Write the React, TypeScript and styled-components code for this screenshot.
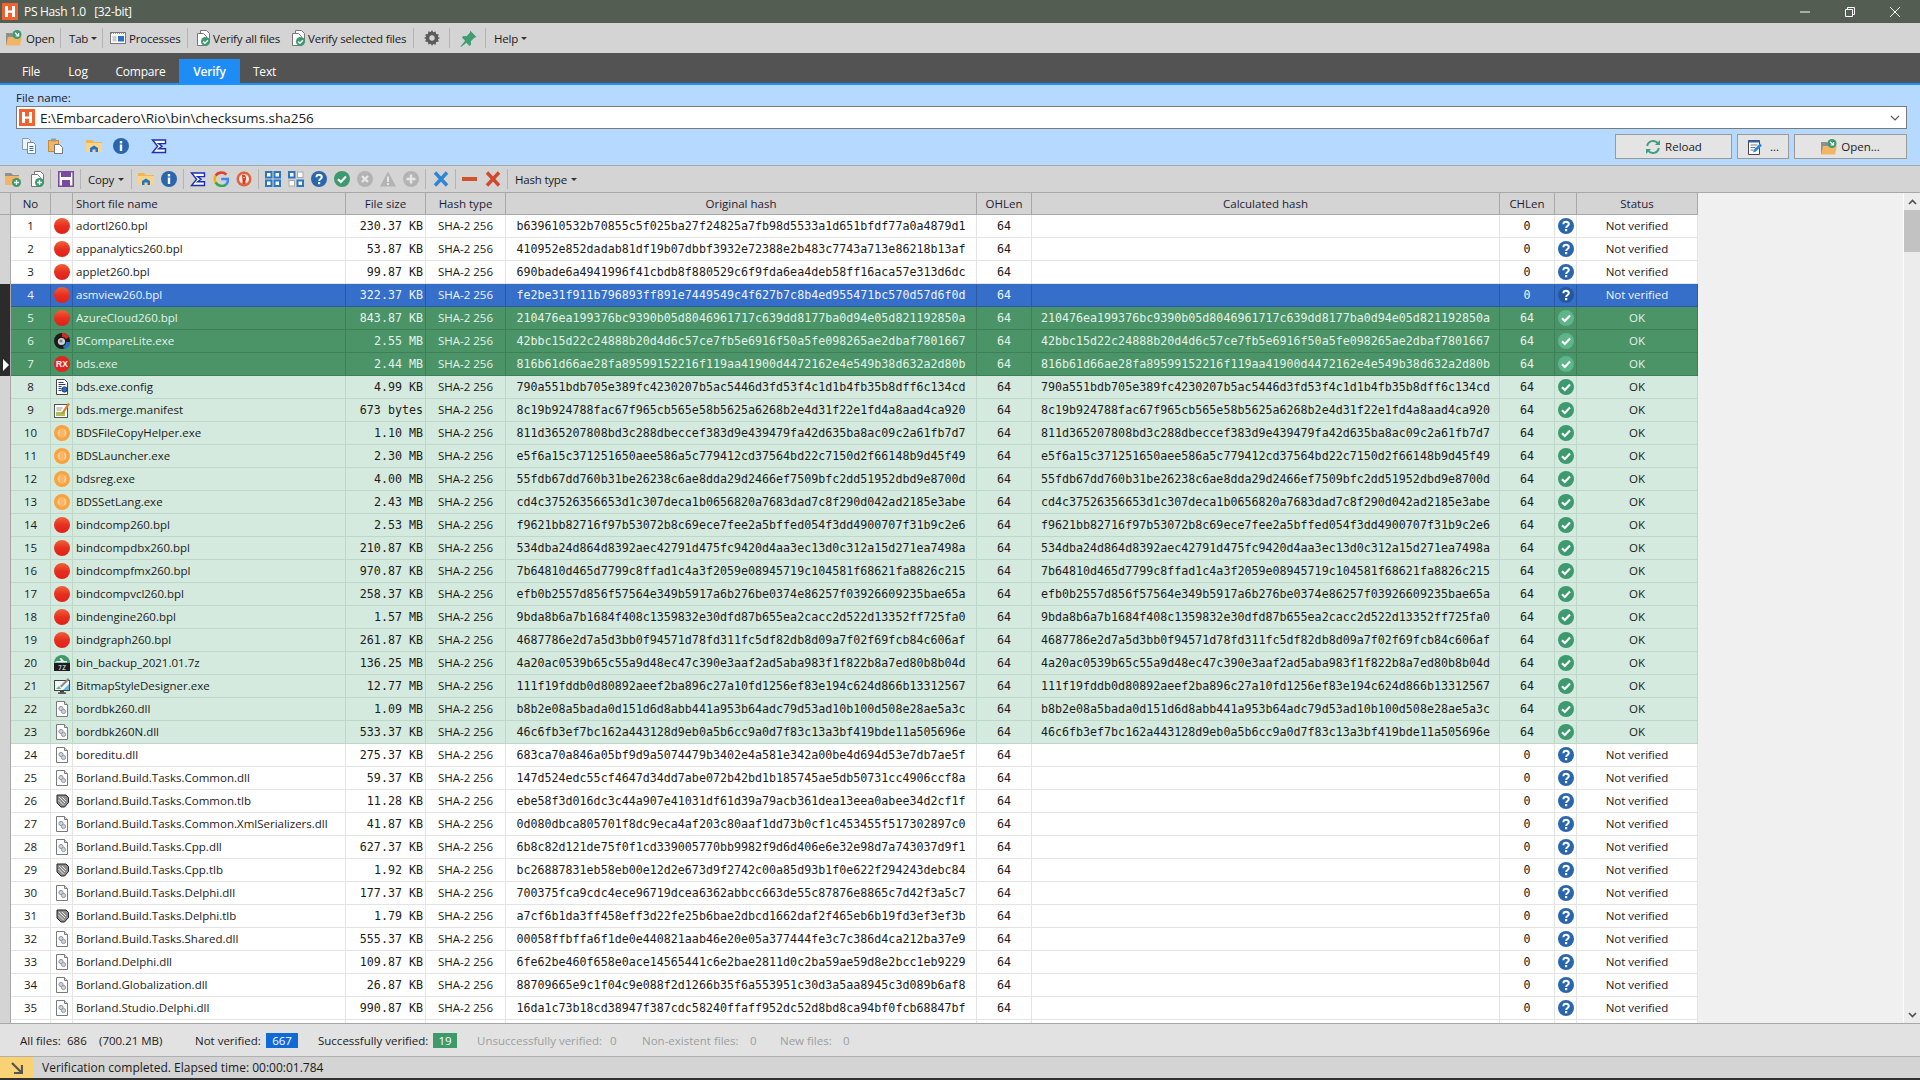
// App.tsx
import React from 'react';
import styled, { createGlobalStyle } from 'styled-components';

const UI_FONT = '"Open Sans", "Noto Sans", sans-serif';
const MONO_FONT = '"DejaVu Sans Mono", "Liberation Mono", monospace';
const COLS = '11px 40px 22px 273px 80px 80px 471px 55px 468px 55px 22px 121px';

const GlobalStyle = createGlobalStyle`
  html, body {
    margin: 0;
    padding: 0;
    background: #f0f0f0;
  }
  body {
    font-family: ${UI_FONT};
    font-size: 11.5px;
    color: #1a1a1a;
  }
`;

const Frame = styled.div`
  width: 1920px;
  height: 1080px;
  display: flex;
  flex-direction: column;
  overflow: hidden;
`;

const TitleBar = styled.div`
  height: 23px;
  flex: none;
  display: flex;
  align-items: center;
  background: #535d52;
  color: #fff;
  font-size: 12px;
  padding-left: 2px;
`;

const TitleText = styled.span`
  margin-left: 6px;
  white-space: pre;
  letter-spacing: -0.33px;
`;

const WinControls = styled.div`
  margin-left: auto;
  display: flex;
  align-items: center;
  padding-right: 20px;
  gap: 35px;
`;

const MainToolbar = styled.div`
  height: 30px;
  flex: none;
  display: flex;
  align-items: center;
  background: #d4d4d4;
  padding-left: 6px;
`;

const ToolButton = styled.div<{ $gap?: number; $w: number; $l?: number }>`
  display: flex;
  align-items: center;
  flex: none;
  width: ${(p) => p.$w}px;
  margin-left: ${(p) => p.$l ?? 0}px;
  gap: ${(p) => p.$gap ?? 3}px;
  white-space: nowrap;
  letter-spacing: -0.2px;
`;

const ToolSep = styled.div<{ $l?: number; $r?: number }>`
  width: 1px;
  height: 20px;
  background: #b4b4b4;
  margin: 0 ${(p) => p.$r ?? 7}px 0 ${(p) => p.$l ?? 7}px;
  flex: none;
`;

const Caret = styled.span`
  width: 0;
  height: 0;
  border-left: 3px solid transparent;
  border-right: 3px solid transparent;
  border-top: 3px solid #333;
  margin-left: auto;
`;

const TabBar = styled.div`
  height: 30px;
  flex: none;
  display: flex;
  align-items: flex-end;
  background: #535353;
  padding-left: 8px;
  border-bottom: 2px solid #1e90ff;
`;

const Tab = styled.div<{ $active?: boolean; $w: number }>`
  height: 24px;
  width: ${(p) => p.$w}px;
  display: flex;
  align-items: center;
  justify-content: center;
  color: #fff;
  font-size: 12px;
  letter-spacing: -0.2px;
  background: ${(p) => (p.$active ? '#1e8cf5' : 'transparent')};
  font-weight: ${(p) => (p.$active ? 600 : 400)};
`;

const FilePanel = styled.div`
  height: 80px;
  flex: none;
  box-sizing: border-box;
  background: #b5d9ff;
  padding: 5px 13px 0 16px;
`;

const FieldLabel = styled.div`
  height: 16px;
  line-height: 16px;
`;

const Combo = styled.div`
  height: 23px;
  box-sizing: border-box;
  display: flex;
  align-items: center;
  background: #fff;
  border: 1px solid #7a7a7a;
  padding: 0 6px 0 2px;
`;

const ComboText = styled.span`
  margin-left: 5px;
  font-size: 13.5px;
  flex: 1;
`;

const PanelRow = styled.div`
  margin-top: 5px;
  height: 25px;
  display: flex;
  align-items: center;
`;

const IconSlot = styled.div<{ $l: number }>`
  display: flex;
  margin-left: ${(p) => p.$l}px;
  margin-bottom: 1px;
`;

const ActionButtons = styled.div`
  margin-left: auto;
  display: flex;
  gap: 5px;
`;

const ActionButton = styled.div<{ $w: number }>`
  width: ${(p) => p.$w}px;
  height: 25px;
  box-sizing: border-box;
  display: flex;
  align-items: center;
  justify-content: center;
  gap: 4px;
  background: #e4e4e4;
  border: 1px solid #9a9a9a;
`;

const GridToolbar = styled.div`
  height: 27px;
  flex: none;
  box-sizing: border-box;
  display: flex;
  align-items: center;
  background: #d4d4d4;
  border-top: 1px solid #a8a8a8;
  padding-left: 5px;
`;

const StripIcon = styled.div<{ $l?: number }>`
  display: flex;
  margin-left: ${(p) => p.$l ?? 0}px;
`;

const GridArea = styled.div`
  height: 832px;
  flex: none;
  display: flex;
  background: #f0f0f0;
  border-top: 1px solid #a8a8a8;
  border-bottom: 1px solid #a8a8a8;
  box-sizing: border-box;
`;

const Table = styled.div`
  width: 1698px;
  flex: none;
  overflow: hidden;
`;

const HeaderRow = styled.div`
  display: grid;
  grid-template-columns: ${COLS};
  height: 22px;
  box-sizing: border-box;
  background: #d4d4d4;
  border-bottom: 1px solid #a8a8a8;
`;

const HeaderCell = styled.div<{ $left?: boolean }>`
  display: flex;
  align-items: center;
  justify-content: ${(p) => (p.$left ? 'flex-start' : 'center')};
  padding-left: ${(p) => (p.$left ? 3 : 0)}px;
  border-right: 1px solid #a8a8a8;
  color: #1c1c34;
`;

type Tone = 'plain' | 'selected' | 'done' | 'ok';

const TONES: Record<Tone, { bg: string; line: string; fg: string; mark: string }> = {
  plain: { bg: '#ffffff', line: '#e4e4e4', fg: '#1a1a1a', mark: '#d4d4d4' },
  selected: { bg: '#366fc9', line: '#2a5aa6', fg: '#eef4fc', mark: '#2b2b2b' },
  done: { bg: '#4a9468', line: '#3d7f58', fg: '#e6f2ea', mark: '#2b2b2b' },
  ok: { bg: '#d5eadf', line: '#bdd7c9', fg: '#1a1a1a', mark: '#d4d4d4' },
};

const Row = styled.div<{ $tone: Tone }>`
  display: grid;
  grid-template-columns: ${COLS};
  height: 23px;
  box-sizing: border-box;
  background: ${(p) => TONES[p.$tone].bg};
  color: ${(p) => TONES[p.$tone].fg};
  border-bottom: 1px solid ${(p) => TONES[p.$tone].line};
  --cell-line: ${(p) => TONES[p.$tone].line};
`;

const Mark = styled.div<{ $tone: Tone }>`
  display: flex;
  align-items: center;
  padding-left: 3px;
  box-sizing: border-box;
  background: ${(p) => TONES[p.$tone].mark};
  border-right: 1px solid #a8a8a8;
  margin-bottom: -1px;
`;

const Pointer = styled.span`
  width: 0;
  height: 0;
  border-top: 6px solid transparent;
  border-bottom: 6px solid transparent;
  border-left: 6px solid #fff;
`;

const Cell = styled.div<{ $align?: 'left' | 'right' | 'center'; $mono?: boolean }>`
  display: flex;
  align-items: center;
  min-width: 0;
  white-space: pre;
  overflow: hidden;
  border-right: 1px solid var(--cell-line);
  justify-content: ${(p) =>
    p.$align === 'left' ? 'flex-start' : p.$align === 'right' ? 'flex-end' : 'center'};
  padding-left: ${(p) => (p.$align === 'left' ? 3 : 0)}px;
  padding-right: ${(p) => (p.$align === 'right' ? 2 : 0)}px;
  padding-bottom: ${(p) => (p.$mono ? 0 : 1)}px;
  font-family: ${(p) => (p.$mono ? MONO_FONT : UI_FONT)};
  font-size: ${(p) => (p.$mono ? '11.67px' : '11.5px')};
`;

const IconCell = styled(Cell)`
  padding-bottom: 0;
`;

const EmptySpace = styled.div`
  flex: 1;
  background: #f0f0f0;
`;

const ScrollBar = styled.div`
  width: 17px;
  flex: none;
  display: flex;
  flex-direction: column;
  align-items: center;
  background: #ececec;
  border-left: 1px solid #fafafa;
  box-sizing: border-box;
`;

const ScrollArrow = styled.div`
  height: 17px;
  flex: none;
  display: flex;
  align-items: center;
  justify-content: center;
`;

const ScrollThumb = styled.div`
  width: 100%;
  height: 42px;
  background: #c2c2c2;
`;

const ScrollFill = styled.div`
  flex: 1;
`;

const StatusBar = styled.div`
  height: 32px;
  flex: none;
  box-sizing: border-box;
  display: flex;
  align-items: center;
  background: #e2e2e2;
  padding-left: 20px;
`;

const StatLabel = styled.span<{ $muted?: boolean; $w?: number; $l?: number }>`
  flex: none;
  width: ${(p) => (p.$w ? `${p.$w}px` : 'auto')};
  margin-left: ${(p) => p.$l ?? 0}px;
  color: ${(p) => (p.$muted ? '#9aa0a0' : '#1a1a1a')};
  white-space: pre;
`;

const Badge = styled.span<{ $bg: string; $w: number }>`
  width: ${(p) => p.$w}px;
  height: 15px;
  flex: none;
  display: flex;
  align-items: center;
  justify-content: center;
  color: #fff;
  background: ${(p) => p.$bg};
`;

const MessageBar = styled.div`
  height: 22px;
  flex: none;
  box-sizing: border-box;
  display: flex;
  align-items: center;
  background: #d4d4d4;
  border-top: 1px solid #b0b0b0;
`;

const MessageIcon = styled.div`
  width: 33px;
  height: 100%;
  flex: none;
  display: flex;
  align-items: center;
  justify-content: center;
  background: #f9d373;
`;

const MessageText = styled.span`
  margin-left: 9px;
  font-size: 12px;
`;

const BottomLine = styled.div`
  flex: 1;
  background: #303030;
`;

/* ---------- drawn icons ---------- */

const Svg: React.FC<{ s?: number; children: React.ReactNode }> = ({ s = 16, children }) => (
  <svg width={s} height={s} viewBox="0 0 16 16" style={{ display: 'block', flex: 'none' }}>
    {children}
  </svg>
);

const HLogo = () => (
  <svg width="16" height="17" viewBox="0 0 16 17" style={{ display: 'block', flex: 'none' }}>
    <rect width="16" height="17" fill="#f2622e" />
    <path d="M3 3h3v4.5h4V3h3v11h-3V9.8H6V14H3z" fill="#fff" />
  </svg>
);

const RedBall = () => (
  <Svg>
    <defs>
      <linearGradient id="redball" x1="0" y1="0" x2="0" y2="1">
        <stop offset="0" stopColor="#ee6238" />
        <stop offset="0.5" stopColor="#e6301f" />
        <stop offset="1" stopColor="#e0201a" />
      </linearGradient>
    </defs>
    <circle cx="8" cy="8" r="8" fill="url(#redball)" />
  </Svg>
);

const OrangeBall = () => (
  <Svg>
    <circle cx="8" cy="8" r="8" fill="#f9a23e" />
    <circle cx="8" cy="8" r="5" fill="#fbb565" />
    <path d="M5.5 5c-1 2-1 4 0 6M10.5 5c1 2 1 4 0 6" stroke="#fde0b8" strokeWidth="1" fill="none" />
    <path d="M7 10.5h.1M9 10.5h.1" stroke="#fde0b8" strokeWidth="1" />
  </Svg>
);

const CompareIcon = () => (
  <Svg>
    <circle cx="8" cy="8" r="8" fill="#1c1c1c" />
    <path d="M8 0a8 8 0 0 1 7 4L12 6a4 4 0 0 0-4-2z" fill="#d62a20" />
    <path d="M16 9a8 8 0 0 1-6 7l-1-3a4 4 0 0 0 3-4z" fill="#2d6fc4" />
    <circle cx="7.5" cy="8.5" r="3.6" fill="#cfd3d3" />
    <circle cx="7" cy="8" r="1.6" fill="#7b8080" />
  </Svg>
);

const RxIcon = () => (
  <Svg>
    <circle cx="8" cy="8" r="8" fill="#e1251b" />
    <text x="8" y="11" textAnchor="middle" fontSize="8.5" fontWeight="700" fill="#fff" fontFamily="Liberation Sans, sans-serif">
      RX
    </text>
  </Svg>
);

const ConfigIcon = () => (
  <Svg>
    <path d="M2.5.5h8l3 3v12h-11z" fill="#fff" stroke="#444" />
    <path d="M4.5 3.5h5M4.5 5.5h7M4.5 7.5h3M4.5 9.5h3M4.5 11.5h3" stroke="#223a88" />
    <circle cx="10.5" cy="10.5" r="2.6" fill="#2f6fc0" stroke="#16366e" />
  </Svg>
);

const ManifestIcon = () => (
  <Svg>
    <rect x="0.5" y="2.5" width="13" height="13" fill="#fdfdf6" stroke="#555" />
    <path d="M2 2.5h10" stroke="#555" strokeDasharray="1 1" />
    <path d="M2.5 6h6M2.5 8h5" stroke="#9a9a9a" />
    <rect x="2" y="10" width="9" height="4" fill="#a9c15e" />
    <path d="M8 10l6-9 2 1-6 9-3 1z" fill="#d9812f" />
  </Svg>
);

const SevenZipIcon = () => (
  <Svg>
    <path d="M0 8a8 8 0 0 1 16 0z" fill="#3d9a6b" />
    <path d="M3 6h4l-1.5-3h2L10 6h3v1.5H0z" fill="#fff" opacity="0.9" />
    <rect y="8" width="16" height="8" fill="#1d1d1d" />
    <text x="8" y="14.6" textAnchor="middle" fontSize="6.5" fill="#fff" fontFamily="DejaVu Sans Mono, monospace">
      7Z
    </text>
  </Svg>
);

const DesignerIcon = () => (
  <Svg>
    <rect x="0.5" y="2.5" width="15" height="10" fill="#f3f6f8" stroke="#444" />
    <path d="M9 12l6-6v6z" fill="#67b7e3" />
    <path d="M2 11l3-3 2 3z" fill="#5eb571" />
    <path d="M6 8l8-8 1.5 1.5-8 8z" fill="#8b8b8b" />
    <rect x="6" y="13" width="4" height="1.5" fill="#444" />
    <rect x="4" y="14.5" width="8" height="1.2" fill="#222" />
  </Svg>
);

const DllIcon = () => (
  <Svg>
    <path d="M2.5.5h8l3 3v12h-11z" fill="#fff" stroke="#7a7a7a" />
    <path d="M10.5.5v3h3" fill="#ddd" stroke="#7a7a7a" />
    <circle cx="7" cy="7.5" r="2.1" fill="#cdd3d8" stroke="#8f979e" />
    <circle cx="9.5" cy="10.5" r="2.1" fill="#cdd3d8" stroke="#8f979e" />
  </Svg>
);

const TlbIcon = () => (
  <Svg>
    <path d="M3 2h9l2.5 2.5v5L10.500 14H7L3 10z" fill="#8d8d8d" stroke="#222" />
    <path d="M5 4l6 6M8 4l4 4M4.500 7l5 5" stroke="#e8e8e8" />
  </Svg>
);

const ROW_ICONS: Record<string, React.FC> = {
  r: RedBall,
  o: OrangeBall,
  c: CompareIcon,
  x: RxIcon,
  g: ConfigIcon,
  m: ManifestIcon,
  z: SevenZipIcon,
  s: DesignerIcon,
  d: DllIcon,
  t: TlbIcon,
};

const HelpIcon: React.FC<{ fill?: string }> = ({ fill = '#2a66ae' }) => (
  <Svg>
    <circle cx="8" cy="8" r="8" fill={fill} />
    <path d="M5.4 6.2c0-3.2 5.4-3.2 5.4-.1 0 2-2.6 1.9-2.6 3.9" stroke="#fff" strokeWidth="2" fill="none" />
    <rect x="7" y="11" width="2.2" height="2.2" fill="#fff" />
  </Svg>
);

const CheckIcon: React.FC<{ fill?: string }> = ({ fill = '#3d9a6e' }) => (
  <Svg>
    <circle cx="8" cy="8" r="8" fill={fill} />
    <path d="M4 8.3l2.8 2.7L12 5.6" stroke="#fff" strokeWidth="2.2" fill="none" />
  </Svg>
);

const InfoIcon = () => (
  <Svg>
    <circle cx="8" cy="8" r="8" fill="#2a66ae" />
    <rect x="6.8" y="3" width="2.4" height="2.4" fill="#fff" />
    <rect x="6.8" y="6.5" width="2.4" height="6.5" fill="#fff" />
  </Svg>
);

const FolderIcon = () => (
  <Svg>
    <path d="M0 2h6l2 2h8v10H0z" fill="#f3b64e" />
    <rect y="5" width="16" height="9" fill="#fbd488" />
    <path d="M4 14v-4l4-2.500L12 10v4H9.500v-2.500h-3V14z" fill="#1f76cc" />
  </Svg>
);

const SigmaIcon = () => (
  <Svg>
    <path d="M1.500 2h13v3.600H7.600L11 8.200l-3.400 2.600h6.900V14.500h-13L6.600 8.200z" fill="#fff" stroke="#1b2fb5" strokeWidth="1.4" />
  </Svg>
);

const GoogleIcon = () => (
  <Svg>
    <path d="M13.4 3.6A7 7 0 0 0 2.6 4.7" stroke="#e2412f" strokeWidth="2.6" fill="none" />
    <path d="M2.6 4.7a7 7 0 0 0 0 6.6" stroke="#f5b400" strokeWidth="2.6" fill="none" />
    <path d="M2.6 11.3a7 7 0 0 0 10.4 2.2" stroke="#35a853" strokeWidth="2.6" fill="none" />
    <path d="M13 13.5A7 7 0 0 0 15 8H8.2" stroke="#4285f4" strokeWidth="2.6" fill="none" />
  </Svg>
);

const DuckIcon = () => (
  <Svg>
    <circle cx="8" cy="8" r="7.5" fill="#e2603a" />
    <circle cx="8" cy="8" r="5" fill="#fbe9e1" />
    <path d="M6 4c3-1 4 1 4 3s-1 3-.5 6h-3c.5-3-.5-6-.5-9z" fill="#d9391f" />
    <circle cx="8" cy="6.5" r="0.8" fill="#fff" />
  </Svg>
);

const GridIcon: React.FC<{ partial?: boolean }> = ({ partial }) => (
  <Svg>
    <rect x="1" y="1" width="5.5" height="5.5" fill="#fff" stroke="#2a77c0" strokeWidth="2" />
    <rect
      x={partial ? 9.5 : 9.5}
      y="1"
      width="5.5"
      height="5.5"
      fill="#fff"
      stroke={partial ? '#a9a9a9' : '#2a77c0'}
      strokeWidth={partial ? 1 : 2}
    />
    <rect
      x="1"
      y="9.5"
      width="5.5"
      height="5.5"
      fill="#fff"
      stroke={partial ? '#a9a9a9' : '#2a77c0'}
      strokeWidth={partial ? 1 : 2}
    />
    <rect x="9.5" y="9.5" width="5.5" height="5.5" fill="#fff" stroke="#2a77c0" strokeWidth="2" />
  </Svg>
);

const GrayX = () => (
  <Svg>
    <circle cx="8" cy="8" r="8" fill="#b3b3b3" />
    <path d="M5 5l6 6M11 5l-6 6" stroke="#e6e6e6" strokeWidth="2.4" />
  </Svg>
);

const GrayWarn = () => (
  <Svg>
    <path d="M8 .5L16 15.500H0z" fill="#b3b3b3" />
    <rect x="7" y="5.5" width="2" height="5.5" fill="#e6e6e6" />
    <rect x="7" y="12" width="2" height="2" fill="#e6e6e6" />
  </Svg>
);

const GrayPlus = () => (
  <Svg>
    <circle cx="8" cy="8" r="8" fill="#b3b3b3" />
    <path d="M8 3.500v9M3.500 8h9" stroke="#e6e6e6" strokeWidth="2.4" />
  </Svg>
);

const BlueX = () => (
  <Svg>
    <path d="M2 1.500l12 13M14 1.500l-12 13" stroke="#2d86d6" strokeWidth="3.4" />
  </Svg>
);

const RedMinus = () => (
  <Svg>
    <rect y="6" width="15" height="4" fill="#d0532c" />
  </Svg>
);

const RedX = () => (
  <Svg>
    <path d="M2 1.500l12 13M14 1.500l-12 13" stroke="#d0492c" strokeWidth="3.4" />
  </Svg>
);

const SaveIcon = () => (
  <Svg>
    <path d="M.8.8h14.4v14.4H.8z" fill="#fff" stroke="#7a4aa0" strokeWidth="1.6" />
    <rect x="3" y="1" width="10" height="5" fill="#7a4aa0" />
    <rect x="4" y="9" width="8" height="6" fill="#7a4aa0" />
  </Svg>
);

const GreenBadge: React.FC<{ plus?: boolean }> = ({ plus }) => (
  <>
    <circle cx="11.5" cy="11.5" r="4.5" fill="#3d9a6e" />
    {plus ? (
      <path d="M11.500 9v5M9 11.500h5" stroke="#fff" strokeWidth="1.3" />
    ) : (
      <path d="M9.200 11.500l1.700 1.700 3-3" stroke="#fff" strokeWidth="1.4" fill="none" />
    )}
  </>
);

const FolderAdd = () => (
  <Svg>
    <path d="M0 2h6l2 2h6v10H0z" fill="#8f8f8f" />
    <rect y="5" width="14" height="9" fill="#f1b565" />
    <GreenBadge plus />
  </Svg>
);

const FilesBadge: React.FC<{ plus?: boolean }> = ({ plus }) => (
  <Svg>
    <path d="M6.500.5h6l3 3v9h-9z" fill="#fff" stroke="#777" />
    <path d="M3.500 3.500h6l3 3v9h-9z" fill="#fff" stroke="#777" />
    <GreenBadge plus={plus} />
  </Svg>
);

const OpenIcon = () => (
  <Svg>
    <path d="M0 3h6l2 2h6v10H0z" fill="#8f8f8f" />
    <path d="M2 7h14l-2 8.500H0z" fill="#f1b565" />
    <circle cx="11" cy="4.5" r="4.5" fill="#3d9a6e" />
    <path d="M9 2.800l3.500 3.200M12.600 3v3h-3" stroke="#fff" strokeWidth="1.2" fill="none" />
  </Svg>
);

const ProcessIcon = () => (
  <Svg>
    <rect x="0.5" y="2.5" width="15" height="11" fill="#fff" stroke="#777" />
    <path d="M1 3.500h14" stroke="#999" strokeDasharray="1 1" />
    <rect x="2.5" y="6" width="4" height="5.5" fill="#ccc" />
    <rect x="8" y="6" width="6" height="5.5" fill="#2a70c0" />
  </Svg>
);

const GearIcon = () => (
  <Svg>
    <path d="M8 0l1.200 2.300 2.400-.9.500 2.700 2.700.5-.9 2.400L16 8l-2.100 1.200.9 2.400-2.700.5-.5 2.700-2.400-.9L8 16l-1.200-2.300-2.400.9-.5-2.700-2.700-.5.9-2.400L0 8l2.100-1.200-.9-2.400 2.700-.5.5-2.700 2.400.9z" fill="#5b5b5b" />
    <circle cx="8" cy="8" r="2.7" fill="#d4d4d4" />
  </Svg>
);

const PinIcon = () => (
  <Svg s={17}>
    <path d="M9.500.5l6 6-2 .8-3.300 3.300.2 3-1.400 1.400-3-3L1 16l-.5-.5 4.300-5.500-3-3L3.200 5.600l3 .2L9.300 2.500z" fill="#3f9d70" />
  </Svg>
);

const CopyDocs = () => (
  <Svg>
    <path d="M1.500.5h6l2 2v9h-8z" fill="#eef4fa" stroke="#8a9aaa" />
    <path d="M6.500 4.500h6l2 2v9h-8z" fill="#fff" stroke="#7a8a9a" />
    <path d="M8.500 8.500h4M8.500 10.500h4M8.500 12.500h4" stroke="#2a66ae" />
  </Svg>
);

const PasteDocs = () => (
  <Svg>
    <rect x="0.5" y="2.5" width="10" height="11" fill="#f1b565" stroke="#c98a3a" />
    <rect x="3" y="0.5" width="5" height="3" fill="#9a9a9a" />
    <path d="M6.500 6.500h5l3 3v6h-8z" fill="#fff" stroke="#777" />
  </Svg>
);

const EditDoc = () => (
  <Svg>
    <path d="M1.500 1.500h11v14h-11z" fill="#fff" stroke="#445" />
    <path d="M1.500 1.500h11v2h-11z" fill="#2a66ae" />
    <path d="M3.500 6h7M3.500 8.500h5M3.500 11h3" stroke="#777" />
    <path d="M6 13.500l1-3 6-6 2 2-6 6z" fill="#2d86d6" />
  </Svg>
);

const ReloadIcon = () => (
  <Svg>
    <path d="M2.200 7A6 6 0 0 1 13 4.500" stroke="#3f9f80" strokeWidth="2" fill="none" />
    <path d="M13.800 9A6 6 0 0 1 3 11.500" stroke="#3f9f80" strokeWidth="2" fill="none" />
    <path d="M15 1v5h-5z" fill="#3f9f80" />
    <path d="M1 15v-5h5z" fill="#3f9f80" />
  </Svg>
);

const Chevron = () => (
  <svg width="10" height="6" viewBox="0 0 10 6" style={{ display: 'block' }}>
    <path d="M1 1l4 4 4-4" stroke="#555" strokeWidth="1.1" fill="none" />
  </svg>
);

const CornerArrow = () => (
  <svg width="12" height="12" viewBox="0 0 12 12" style={{ display: 'block' }}>
    <path d="M1 1l9 9M11 3v8H3" stroke="#555" strokeWidth="2.2" fill="none" />
  </svg>
);

const WinMin = () => (
  <svg width="10" height="10" viewBox="0 0 10 10" style={{ display: 'block' }}>
    <path d="M0 5h10" stroke="#fff" />
  </svg>
);

const WinRestore = () => (
  <svg width="10" height="10" viewBox="0 0 10 10" style={{ display: 'block' }}>
    <path d="M.5 2.500h7v7h-7zM2.500 2.500v-2h7v7h-2" stroke="#fff" fill="none" />
  </svg>
);

const WinClose = () => (
  <svg width="10" height="10" viewBox="0 0 10 10" style={{ display: 'block' }}>
    <path d="M0 0l10 10M10 0L0 10" stroke="#fff" />
  </svg>
);

const ScrollChevron: React.FC<{ down?: boolean }> = ({ down }) => (
  <svg width="9" height="6" viewBox="0 0 9 6" style={{ display: 'block' }}>
    <path d={down ? 'M1 1l3.500 3.500L8 1' : 'M1 5l3.500-3.500L8 5'} stroke="#505050" strokeWidth="1.6" fill="none" />
  </svg>
);

/* ---------- data ---------- */

const B = 'Borland.Build.Tasks.';

const FILES: string[] = [
  'adortl260.bpl|230.37 KB|b639610532b70855c5f025ba27f24825a7fb98d5533a1d651bfdf77a0a4879d1|r',
  'appanalytics260.bpl|53.87 KB|410952e852dadab81df19b07dbbf3932e72388e2b483c7743a713e86218b13af|r',
  'applet260.bpl|99.87 KB|690bade6a4941996f41cbdb8f880529c6f9fda6ea4deb58ff16aca57e313d6dc|r',
  'asmview260.bpl|322.37 KB|fe2be31f911b796893ff891e7449549c4f627b7c8b4ed955471bc570d57d6f0d|r',
  'AzureCloud260.bpl|843.87 KB|210476ea199376bc9390b05d8046961717c639dd8177ba0d94e05d821192850a|r',
  'BCompareLite.exe|2.55 MB|42bbc15d22c24888b20d4d6c57ce7fb5e6916f50a5fe098265ae2dbaf7801667|c',
  'bds.exe|2.44 MB|816b61d66ae28fa89599152216f119aa41900d4472162e4e549b38d632a2d80b|x',
  'bds.exe.config|4.99 KB|790a551bdb705e389fc4230207b5ac5446d3fd53f4c1d1b4fb35b8dff6c134cd|g',
  'bds.merge.manifest|673 bytes|8c19b924788fac67f965cb565e58b5625a6268b2e4d31f22e1fd4a8aad4ca920|m',
  'BDSFileCopyHelper.exe|1.10 MB|811d365207808bd3c288dbeccef383d9e439479fa42d635ba8ac09c2a61fb7d7|o',
  'BDSLauncher.exe|2.30 MB|e5f6a15c371251650aee586a5c779412cd37564bd22c7150d2f66148b9d45f49|o',
  'bdsreg.exe|4.00 MB|55fdb67dd760b31be26238c6ae8dda29d2466ef7509bfc2dd51952dbd9e8700d|o',
  'BDSSetLang.exe|2.43 MB|cd4c37526356653d1c307deca1b0656820a7683dad7c8f290d042ad2185e3abe|o',
  'bindcomp260.bpl|2.53 MB|f9621bb82716f97b53072b8c69ece7fee2a5bffed054f3dd4900707f31b9c2e6|r',
  'bindcompdbx260.bpl|210.87 KB|534dba24d864d8392aec42791d475fc9420d4aa3ec13d0c312a15d271ea7498a|r',
  'bindcompfmx260.bpl|970.87 KB|7b64810d465d7799c8ffad1c4a3f2059e08945719c104581f68621fa8826c215|r',
  'bindcompvcl260.bpl|258.37 KB|efb0b2557d856f57564e349b5917a6b276be0374e86257f03926609235bae65a|r',
  'bindengine260.bpl|1.57 MB|9bda8b6a7b1684f408c1359832e30dfd87b655ea2cacc2d522d13352ff725fa0|r',
  'bindgraph260.bpl|261.87 KB|4687786e2d7a5d3bb0f94571d78fd311fc5df82db8d09a7f02f69fcb84c606af|r',
  'bin_backup_2021.01.7z|136.25 MB|4a20ac0539b65c55a9d48ec47c390e3aaf2ad5aba983f1f822b8a7ed80b8b04d|z',
  'BitmapStyleDesigner.exe|12.77 MB|111f19fddb0d80892aeef2ba896c27a10fd1256ef83e194c624d866b13312567|s',
  'bordbk260.dll|1.09 MB|b8b2e08a5bada0d151d6d8abb441a953b64adc79d53ad10b100d508e28ae5a3c|d',
  'bordbk260N.dll|533.37 KB|46c6fb3ef7bc162a443128d9eb0a5b6cc9a0d7f83c13a3bf419bde11a505696e|d',
  'boreditu.dll|275.37 KB|683ca70a846a05bf9d9a5074479b3402e4a581e342a00be4d694d53e7db7ae5f|d',
  `${B}Common.dll|59.37 KB|147d524edc55cf4647d34dd7abe072b42bd1b185745ae5db50731cc4906ccf8a|d`,
  `${B}Common.tlb|11.28 KB|ebe58f3d016dc3c44a907e41031df61d39a79acb361dea13eea0abee34d2cf1f|t`,
  `${B}Common.XmlSerializers.dll|41.87 KB|0d080dbca805701f8dc9eca4af203c80aaf1dd73b0cf1c453455f517302897c0|d`,
  `${B}Cpp.dll|627.37 KB|6b8c82d121de75f0f1cd339005770bb9982f9d6d406e6e32e98d7a743037d9f1|d`,
  `${B}Cpp.tlb|1.92 KB|bc26887831eb58eb00e12d2e673d9f2742c00a85d93b1f0e622f294243debc84|t`,
  `${B}Delphi.dll|177.37 KB|700375fca9cdc4ece96719dcea6362abbcc663de55c87876e8865c7d42f3a5c7|d`,
  `${B}Delphi.tlb|1.79 KB|a7cf6b1da3ff458eff3d22fe25b6bae2dbcd1662daf2f465eb6b19fd3ef3ef3b|t`,
  `${B}Shared.dll|555.37 KB|00058ffbffa6f1de0e440821aab46e20e05a377444fe3c7c386d4ca212ba37e9|d`,
  'Borland.Delphi.dll|109.87 KB|6fe62be460f658e0ace14565441c6e2bae2811d0c2ba59ae59d8e2bcc1eb9229|d',
  'Borland.Globalization.dll|26.87 KB|88709665e9c1f04c9e088f2d1266b35f6a553951c30d3a5aa8945c3d089b6af8|d',
  'Borland.Studio.Delphi.dll|990.87 KB|16da1c73b18cd38947f387cdc58240ffaff952dc52d8bd8ca94bf0fcb68847bf|d',
];

const toneFor = (no: number): Tone => {
  if (no === 4) return 'selected';
  if (no >= 5 && no <= 7) return 'done';
  if (no >= 8 && no <= 23) return 'ok';
  return 'plain';
};

const FileRow: React.FC<{ no: number; line: string }> = ({ no, line }) => {
  const [name, size, hash, icon] = line.split('|');
  const tone = toneFor(no);
  const verified = no >= 5 && no <= 23;
  const Icon = ROW_ICONS[icon];
  return (
    <Row $tone={tone}>
      <Mark $tone={tone}>{no === 7 && <Pointer />}</Mark>
      <Cell>{no}</Cell>
      <IconCell>
        <Icon />
      </IconCell>
      <Cell $align="left">{name}</Cell>
      <Cell $align="right" $mono>
        {size}
      </Cell>
      <Cell>SHA-2 256</Cell>
      <Cell $mono>{hash}</Cell>
      <Cell $mono>64</Cell>
      <Cell $mono>{verified ? hash : ''}</Cell>
      <Cell $mono>{verified ? '64' : '0'}</Cell>
      <IconCell>
        {verified ? (
          <CheckIcon fill={tone === 'done' ? '#5fb58a' : '#3d9a6e'} />
        ) : (
          <HelpIcon fill={tone === 'selected' ? '#25579f' : '#2a66ae'} />
        )}
      </IconCell>
      <Cell>{verified ? 'OK' : 'Not verified'}</Cell>
    </Row>
  );
};

const App: React.FC = () => (
  <Frame>
    <GlobalStyle />
    <TitleBar>
      <HLogo />
      <TitleText>PS Hash 1.0   [32-bit]</TitleText>
      <WinControls>
        <WinMin />
        <WinRestore />
        <WinClose />
      </WinControls>
    </TitleBar>

    <MainToolbar>
      <ToolButton $gap={4} $w={47}>
        <OpenIcon />
        Open
      </ToolButton>
      <ToolSep $r={8} />
      <ToolButton $w={26}>
        Tab
        <Caret />
      </ToolButton>
      <ToolSep />
      <ToolButton $w={70}>
        <ProcessIcon />
        Processes
      </ToolButton>
      <ToolSep $r={6} />
      <ToolButton $gap={3} $w={87}>
        <FilesBadge />
        Verify all files
      </ToolButton>
      <ToolButton $gap={3} $w={118} $l={8}>
        <FilesBadge />
        Verify selected files
      </ToolButton>
      <ToolSep $l={6} $r={10} />
      <GearIcon />
      <ToolSep $l={9} $r={10} />
      <PinIcon />
      <ToolSep $l={8} $r={8} />
      <ToolButton $w={33}>
        Help
        <Caret />
      </ToolButton>
    </MainToolbar>

    <TabBar>
      <Tab $w={46}>File</Tab>
      <Tab $w={48}>Log</Tab>
      <Tab $w={77}>Compare</Tab>
      <Tab $active $w={61}>
        Verify
      </Tab>
      <Tab $w={49}>Text</Tab>
    </TabBar>

    <FilePanel>
      <FieldLabel>File name:</FieldLabel>
      <Combo>
        <HLogo />
        <ComboText>E:\Embarcadero\Rio\bin\checksums.sha256</ComboText>
        <Chevron />
      </Combo>
      <PanelRow>
        <IconSlot $l={5}>
          <CopyDocs />
        </IconSlot>
        <IconSlot $l={11}>
          <PasteDocs />
        </IconSlot>
        <IconSlot $l={22}>
          <FolderIcon />
        </IconSlot>
        <IconSlot $l={11}>
          <InfoIcon />
        </IconSlot>
        <IconSlot $l={22}>
          <SigmaIcon />
        </IconSlot>
        <ActionButtons>
          <ActionButton $w={117}>
            <ReloadIcon />
            Reload
          </ActionButton>
          <ActionButton $w={52}>
            <EditDoc />
            &nbsp;...
          </ActionButton>
          <ActionButton $w={113}>
            <OpenIcon />
            Open...
          </ActionButton>
        </ActionButtons>
      </PanelRow>
    </FilePanel>

    <GridToolbar>
      <FolderAdd />
      <StripIcon $l={7}>
        <FilesBadge plus />
      </StripIcon>
      <ToolSep $l={6} />
      <SaveIcon />
      <ToolSep $l={6} />
      <ToolButton $w={36}>
        Copy
        <Caret />
      </ToolButton>
      <ToolSep $r={6} />
      <FolderIcon />
      <StripIcon $l={7}>
        <InfoIcon />
      </StripIcon>
      <ToolSep $l={6} $r={6} />
      <SigmaIcon />
      <StripIcon $l={7}>
        <GoogleIcon />
      </StripIcon>
      <StripIcon $l={7}>
        <DuckIcon />
      </StripIcon>
      <ToolSep $l={6} $r={6} />
      <GridIcon />
      <StripIcon $l={7}>
        <GridIcon partial />
      </StripIcon>
      <StripIcon $l={7}>
        <HelpIcon />
      </StripIcon>
      <StripIcon $l={7}>
        <CheckIcon />
      </StripIcon>
      <StripIcon $l={7}>
        <GrayX />
      </StripIcon>
      <StripIcon $l={7}>
        <GrayWarn />
      </StripIcon>
      <StripIcon $l={7}>
        <GrayPlus />
      </StripIcon>
      <ToolSep $l={6} />
      <BlueX />
      <ToolSep $l={6} $r={6} />
      <RedMinus />
      <StripIcon $l={7}>
        <RedX />
      </StripIcon>
      <ToolSep $l={6} />
      <ToolButton $w={62}>
        Hash type
        <Caret />
      </ToolButton>
    </GridToolbar>

    <GridArea>
      <Table>
        <HeaderRow>
          <HeaderCell />
          <HeaderCell>No</HeaderCell>
          <HeaderCell />
          <HeaderCell $left>Short file name</HeaderCell>
          <HeaderCell>File size</HeaderCell>
          <HeaderCell>Hash type</HeaderCell>
          <HeaderCell>Original hash</HeaderCell>
          <HeaderCell>OHLen</HeaderCell>
          <HeaderCell>Calculated hash</HeaderCell>
          <HeaderCell>CHLen</HeaderCell>
          <HeaderCell />
          <HeaderCell>Status</HeaderCell>
        </HeaderRow>
        {FILES.map((line, i) => (
          <FileRow key={line} no={i + 1} line={line} />
        ))}
        <Row $tone="plain">
          <Mark $tone="plain" />
          {Array.from({ length: 11 }, (_, i) => (
            <Cell key={i} />
          ))}
        </Row>
      </Table>
      <EmptySpace />
      <ScrollBar>
        <ScrollArrow>
          <ScrollChevron />
        </ScrollArrow>
        <ScrollThumb />
        <ScrollFill />
        <ScrollArrow>
          <ScrollChevron down />
        </ScrollArrow>
      </ScrollBar>
    </GridArea>

    <StatusBar>
      <StatLabel $w={47}>All files:</StatLabel>
      <StatLabel $w={32}>686</StatLabel>
      <StatLabel $w={96}>(700.21 MB)</StatLabel>
      <StatLabel $w={71}>Not verified:</StatLabel>
      <Badge $bg="#0f6ad8" $w={32}>
        667
      </Badge>
      <StatLabel $w={115} $l={20}>
        Successfully verified:
      </StatLabel>
      <Badge $bg="#3d9a6b" $w={24}>
        19
      </Badge>
      <StatLabel $w={133} $l={20} $muted>
        Unsuccessfully verified:
      </StatLabel>
      <StatLabel $w={32} $muted>
        0
      </StatLabel>
      <StatLabel $w={108} $muted>
        Non-existent files:
      </StatLabel>
      <StatLabel $w={30} $muted>
        0
      </StatLabel>
      <StatLabel $w={63} $muted>
        New files:
      </StatLabel>
      <StatLabel $muted>0</StatLabel>
    </StatusBar>

    <MessageBar>
      <MessageIcon>
        <CornerArrow />
      </MessageIcon>
      <MessageText>Verification completed. Elapsed time: 00:00:01.784</MessageText>
    </MessageBar>
    <BottomLine />
  </Frame>
);

export default App;
